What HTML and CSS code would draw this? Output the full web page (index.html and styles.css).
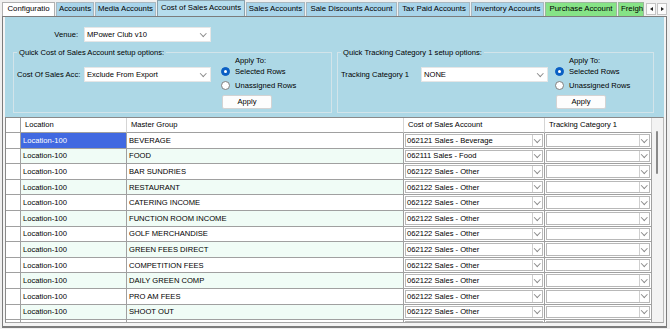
FILE: index.html
```
<!DOCTYPE html>
<html>
<head>
<meta charset="utf-8">
<link rel="stylesheet" href="styles.css">
</head>
<body>
<div class="tabstrip">
  <div class="tablist">
    <div class="tab tw-config white">Configuratio</div>
    <div class="tab tw-acc">Accounts</div>
    <div class="tab tw-media">Media Accounts</div>
    <div class="tab tw-cos selected">Cost of Sales Accounts</div>
    <div class="tab tw-sales">Sales Accounts</div>
    <div class="tab tw-disc">Sale Discounts Account</div>
    <div class="tab tw-tax">Tax Paid Accounts</div>
    <div class="tab tw-inv">Inventory Accounts</div>
    <div class="tab tw-pur green">Purchase Account</div>
    <div class="tab tw-fr green">Freigh</div>
  </div>
  <div class="arrows">
    <div class="arrow"><span class="tri-l"></span></div>
    <div class="arrow"><span class="tri-r"></span></div>
  </div>
</div>
<div class="page">
  <div class="panel">
    <div class="venue-row">
      <span class="venue-lbl">Venue:</span>
      <div class="combo"><span class="combo-text">MPower Club v10</span><span class="chev"></span></div>
    </div>
    <div class="groups">
      <fieldset class="group g1">
        <legend>Quick Cost of Sales Account setup options:</legend>
        <div class="grp-body">
          <div class="field">
            <span class="flbl lbl-cos">Cost Of Sales Acc:</span>
            <div class="combo"><span class="combo-text">Exclude From Export</span><span class="chev"></span></div>
          </div>
          <div class="opts">
            <div class="apply-to">Apply To:</div>
            <div class="radio-row"><span class="radio on"></span><span>Selected Rows</span></div>
            <div class="radio-row"><span class="radio"></span><span>Unassigned Rows</span></div>
            <div class="btn">Apply</div>
          </div>
        </div>
      </fieldset>
      <fieldset class="group g2">
        <legend>Quick Tracking Category 1 setup options:</legend>
        <div class="grp-body">
          <div class="field">
            <span class="flbl lbl-trk">Tracking Category 1</span>
            <div class="combo"><span class="combo-text">NONE</span><span class="chev"></span></div>
          </div>
          <div class="opts">
            <div class="apply-to">Apply To:</div>
            <div class="radio-row"><span class="radio on"></span><span>Selected Rows</span></div>
            <div class="radio-row"><span class="radio"></span><span>Unassigned Rows</span></div>
            <div class="btn">Apply</div>
          </div>
        </div>
      </fieldset>
    </div>
  </div>
  <div class="grid">
    <div class="table">
      <div class="tr head">
        <div class="td rh"></div>
        <div class="td th">Location</div>
        <div class="td th">Master Group</div>
        <div class="td th">Cost of Sales Account</div>
        <div class="td th">Tracking Category 1</div>
      </div>
      <div class="tr">
        <div class="td rh"></div>
        <div class="td txt sel">Location-100</div>
        <div class="td txt">BEVERAGE</div>
        <div class="td cbcell"><div class="cb"><span class="cb-text">062121 Sales - Beverage</span><span class="cb-btn"><span class="chev"></span></span></div></div>
        <div class="td cbcell"><div class="cb"><span class="cb-text"></span><span class="cb-btn"><span class="chev"></span></span></div></div>
      </div>
      <div class="tr alt">
        <div class="td rh"></div>
        <div class="td txt">Location-100</div>
        <div class="td txt">FOOD</div>
        <div class="td cbcell"><div class="cb"><span class="cb-text">062111 Sales - Food</span><span class="cb-btn"><span class="chev"></span></span></div></div>
        <div class="td cbcell"><div class="cb"><span class="cb-text"></span><span class="cb-btn"><span class="chev"></span></span></div></div>
      </div>
      <div class="tr">
        <div class="td rh"></div>
        <div class="td txt">Location-100</div>
        <div class="td txt">BAR SUNDRIES</div>
        <div class="td cbcell"><div class="cb"><span class="cb-text">062122 Sales - Other</span><span class="cb-btn"><span class="chev"></span></span></div></div>
        <div class="td cbcell"><div class="cb"><span class="cb-text"></span><span class="cb-btn"><span class="chev"></span></span></div></div>
      </div>
      <div class="tr alt">
        <div class="td rh"></div>
        <div class="td txt">Location-100</div>
        <div class="td txt">RESTAURANT</div>
        <div class="td cbcell"><div class="cb"><span class="cb-text">062122 Sales - Other</span><span class="cb-btn"><span class="chev"></span></span></div></div>
        <div class="td cbcell"><div class="cb"><span class="cb-text"></span><span class="cb-btn"><span class="chev"></span></span></div></div>
      </div>
      <div class="tr">
        <div class="td rh"></div>
        <div class="td txt">Location-100</div>
        <div class="td txt">CATERING INCOME</div>
        <div class="td cbcell"><div class="cb"><span class="cb-text">062122 Sales - Other</span><span class="cb-btn"><span class="chev"></span></span></div></div>
        <div class="td cbcell"><div class="cb"><span class="cb-text"></span><span class="cb-btn"><span class="chev"></span></span></div></div>
      </div>
      <div class="tr alt">
        <div class="td rh"></div>
        <div class="td txt">Location-100</div>
        <div class="td txt">FUNCTION ROOM INCOME</div>
        <div class="td cbcell"><div class="cb"><span class="cb-text">062122 Sales - Other</span><span class="cb-btn"><span class="chev"></span></span></div></div>
        <div class="td cbcell"><div class="cb"><span class="cb-text"></span><span class="cb-btn"><span class="chev"></span></span></div></div>
      </div>
      <div class="tr">
        <div class="td rh"></div>
        <div class="td txt">Location-100</div>
        <div class="td txt">GOLF MERCHANDISE</div>
        <div class="td cbcell"><div class="cb"><span class="cb-text">062122 Sales - Other</span><span class="cb-btn"><span class="chev"></span></span></div></div>
        <div class="td cbcell"><div class="cb"><span class="cb-text"></span><span class="cb-btn"><span class="chev"></span></span></div></div>
      </div>
      <div class="tr alt">
        <div class="td rh"></div>
        <div class="td txt">Location-100</div>
        <div class="td txt">GREEN FEES DIRECT</div>
        <div class="td cbcell"><div class="cb"><span class="cb-text">062122 Sales - Other</span><span class="cb-btn"><span class="chev"></span></span></div></div>
        <div class="td cbcell"><div class="cb"><span class="cb-text"></span><span class="cb-btn"><span class="chev"></span></span></div></div>
      </div>
      <div class="tr">
        <div class="td rh"></div>
        <div class="td txt">Location-100</div>
        <div class="td txt">COMPETITION FEES</div>
        <div class="td cbcell"><div class="cb"><span class="cb-text">062122 Sales - Other</span><span class="cb-btn"><span class="chev"></span></span></div></div>
        <div class="td cbcell"><div class="cb"><span class="cb-text"></span><span class="cb-btn"><span class="chev"></span></span></div></div>
      </div>
      <div class="tr alt">
        <div class="td rh"></div>
        <div class="td txt">Location-100</div>
        <div class="td txt">DAILY GREEN COMP</div>
        <div class="td cbcell"><div class="cb"><span class="cb-text">062122 Sales - Other</span><span class="cb-btn"><span class="chev"></span></span></div></div>
        <div class="td cbcell"><div class="cb"><span class="cb-text"></span><span class="cb-btn"><span class="chev"></span></span></div></div>
      </div>
      <div class="tr">
        <div class="td rh"></div>
        <div class="td txt">Location-100</div>
        <div class="td txt">PRO AM FEES</div>
        <div class="td cbcell"><div class="cb"><span class="cb-text">062122 Sales - Other</span><span class="cb-btn"><span class="chev"></span></span></div></div>
        <div class="td cbcell"><div class="cb"><span class="cb-text"></span><span class="cb-btn"><span class="chev"></span></span></div></div>
      </div>
      <div class="tr alt">
        <div class="td rh"></div>
        <div class="td txt">Location-100</div>
        <div class="td txt">SHOOT OUT</div>
        <div class="td cbcell"><div class="cb"><span class="cb-text">062122 Sales - Other</span><span class="cb-btn"><span class="chev"></span></span></div></div>
        <div class="td cbcell"><div class="cb"><span class="cb-text"></span><span class="cb-btn"><span class="chev"></span></span></div></div>
      </div>
      <div class="tr">
        <div class="td rh"></div>
        <div class="td txt"></div>
        <div class="td txt"></div>
        <div class="td cbcell"><div class="cb"></div></div>
        <div class="td cbcell"><div class="cb"></div></div>
      </div>
    </div>
    <div class="vscroll"><div class="thumb"></div></div>
  </div>
</div>
</body>
</html>
```
FILE: styles.css
```
html, body {
  margin: 0;
  padding: 0;
}
body {
  width: 670px;
  height: 329px;
  overflow: hidden;
  background: #f0f0f0;
  font-family: "Liberation Sans", Arial, sans-serif;
  font-size: 7.6px;
  color: #000;
}

/* ---------- tab strip ---------- */
.tabstrip {
  display: flex;
  height: 16px;
  position: relative;
  z-index: 2;
}
.tablist {
  display: flex;
  align-items: flex-end;
  width: 644px;
  padding-left: 2px;
  box-sizing: border-box;
  overflow: hidden;
}
.tab {
  flex: 0 0 auto;
  box-sizing: border-box;
  height: 14px;
  line-height: 12px;
  border: 1px solid #a9b8c0;
  border-bottom: none;
  background: #a8d4ea;
  margin-right: 1px;
  text-align: center;
  white-space: nowrap;
  overflow: hidden;
  font-size: 7.8px;
}
.tab.white { background: #ffffff; border-color: #b0b0b0; }
.tab.green { background: #86e386; border-color: #9ab89a; }
.tab.selected {
  height: 17px;
  line-height: 13px;
  background: #b6dded;
  border-color: #8aa2ae;
  margin-bottom: -1px;
}
.tw-config { width: 53px; }
.tw-acc { width: 38px; }
.tw-media { width: 61px; }
.tw-cos { width: 88px; }
.tw-sales { width: 59px; }
.tw-disc { width: 91px; }
.tw-tax { width: 72px; }
.tw-inv { width: 73px; }
.tw-pur { width: 72px; }
.tw-fr { width: 26px; text-align: left; padding-left: 2px; }

.arrows {
  display: flex;
  gap: 1px;
  margin-left: 2px;
  margin-top: 3px;
}
.arrow {
  width: 10px;
  height: 12px;
  box-sizing: border-box;
  background: #fbfbfb;
  border: 1px solid #c4c4c4;
  display: flex;
  align-items: center;
  justify-content: center;
}
.tri-l {
  width: 0; height: 0;
  border-top: 2.5px solid transparent;
  border-bottom: 2.5px solid transparent;
  border-right: 3px solid #222;
}
.tri-r {
  width: 0; height: 0;
  border-top: 2.5px solid transparent;
  border-bottom: 2.5px solid transparent;
  border-left: 3px solid #222;
}

/* ---------- page ---------- */
.page {
  margin-left: 2px;
  width: 665px;
  height: 312px;
  box-sizing: border-box;
  border: 1px solid #7c7c7c;
  border-bottom-width: 2px;
  padding: 0 2px;
  background: #f4f4f4;
  display: flex;
  flex-direction: column;
}
.panel {
  height: 100px;
  flex: 0 0 auto;
  background: #add8e6;
  box-sizing: border-box;
  padding-top: 10px;
}
.venue-row {
  display: flex;
  align-items: center;
  height: 15px;
}
.venue-lbl {
  width: 73px;
  text-align: right;
  margin-right: 6px;
}
.combo {
  width: 127px;
  height: 15px;
  box-sizing: border-box;
  background: #fff;
  border: 1px solid #e6e6e6;
  display: flex;
  align-items: center;
  padding-left: 2px;
  padding-right: 5px;
}
.combo-text { flex: 1; white-space: nowrap; }
.chev {
  width: 3.5px;
  height: 3.5px;
  border-right: 1px solid #8c8c8c;
  border-bottom: 1px solid #8c8c8c;
  transform: rotate(45deg);
  margin-top: -3px;
}

.groups {
  display: flex;
  margin-top: 6px;
  padding-left: 8px;
  gap: 5px;
}
.group {
  margin: 0;
  padding: 0 0 3px 3px;
  border: 1px solid #d2e4ea;
  box-sizing: border-box;
  min-width: 0;
}
.group legend {
  padding: 0 2px;
  line-height: 9px;
  height: 9px;
}
.g1 { width: 319px; }
.g2 { width: 317px; }
.grp-body {
  display: flex;
}
.field {
  display: flex;
  align-items: center;
  margin-top: 10px;
  height: 15px;
}
.flbl { white-space: nowrap; }
.lbl-cos { width: 67px; }
.lbl-trk { width: 80px; }
.opts {
  display: flex;
  flex-direction: column;
}
.g1 .opts { margin-left: 10px; }
.g2 .opts { margin-left: 7px; }
.apply-to {
  height: 7px;
  line-height: 7px;
  padding-left: 14px;
}
.radio-row {
  display: flex;
  align-items: center;
  height: 14px;
  gap: 5px;
}
.radio {
  width: 9px;
  height: 9px;
  box-sizing: border-box;
  border-radius: 50%;
  background: #fff;
  border: 1px solid #7f7f7f;
  display: flex;
  align-items: center;
  justify-content: center;
}
.radio.on {
  background: #0a5fc4;
  border-color: #0a5fc4;
}
.radio.on::after {
  content: "";
  width: 3px;
  height: 3px;
  border-radius: 50%;
  background: #fff;
}
.btn {
  margin-top: 3px;
  margin-left: 1px;
  width: 50px;
  height: 14px;
  box-sizing: border-box;
  background: #fdfdfd;
  border: 1px solid #d3d3d3;
  border-radius: 2px;
  text-align: center;
  line-height: 12px;
}

/* ---------- grid ---------- */
.grid {
  display: flex;
  height: 206px;
  flex: 0 0 auto;
  box-sizing: border-box;
  border: 1px solid #8a8a8a;
  border-right-color: #b9b9b9;
  border-bottom-color: #a4a4a4;
  background: #fff;
  overflow: hidden;
}
.table {
  width: 646px;
  flex: 0 0 auto;
  overflow: hidden;
}
.tr {
  display: grid;
  grid-template-columns: 15px 106px 277px 141px 107px;
  height: 15.6px;
}
.tr.head {
  height: 15px;
}
.td {
  box-sizing: border-box;
  border-right: 1px solid #a0a0a0;
  border-bottom: 1px solid #a0a0a0;
  white-space: nowrap;
  overflow: hidden;
}
.tr.head .td {
  border-right-color: #d5d5d5;
  border-bottom-color: #a0a0a0;
}
.tr.head .td.rh { border-right-color: #a0a0a0; }
.th {
  padding-left: 4px;
  line-height: 14px;
}
.txt {
  padding-left: 2px;
  display: flex;
  align-items: center;
}
.tr.alt .txt { background: #f0fcf6; }
.txt.sel {
  background: #4169e1;
  color: #fff;
}
.rh { background: #fff; }
.cbcell {
  padding: 1px;
  background: #fff;
}
.cb {
  height: 100%;
  box-sizing: border-box;
  border: 1px solid #b8b8b8;
  background: #fff;
  display: flex;
  align-items: center;
}
.cb-text {
  flex: 1;
  padding-left: 1px;
  white-space: nowrap;
}
.cb-btn {
  width: 9px;
  height: 100%;
  border-left: 1px solid #cfcfcf;
  display: flex;
  align-items: center;
  justify-content: center;
}
.vscroll {
  flex: 1;
  background: #f3f3f3;
  padding-top: 13px;
}
.thumb {
  width: 2px;
  height: 43px;
  margin-left: 4px;
  border-radius: 1px;
  background: #8a8a8a;
}
```
